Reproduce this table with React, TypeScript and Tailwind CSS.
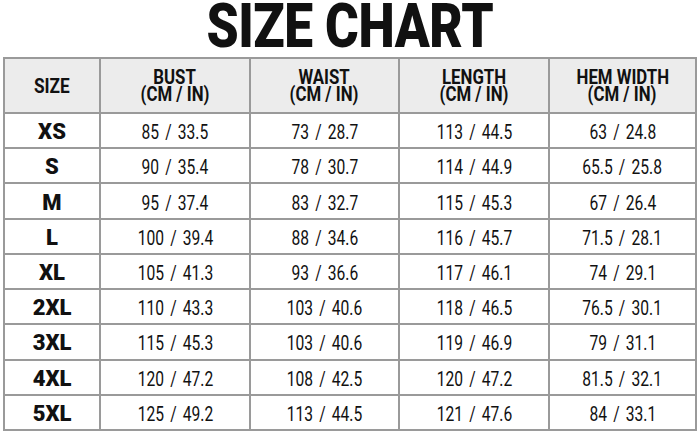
const headers = [
  { top: 'BUST', bottom: '(CM / IN)' },
  { top: 'WAIST', bottom: '(CM / IN)' },
  { top: 'LENGTH', bottom: '(CM / IN)' },
  { top: 'HEM WIDTH', bottom: '(CM / IN)' },
];

const rows: [string, string, string, string, string][] = [
  ['XS', '85 / 33.5', '73 / 28.7', '113 / 44.5', '63 / 24.8'],
  ['S', '90 / 35.4', '78 / 30.7', '114 / 44.9', '65.5 / 25.8'],
  ['M', '95 / 37.4', '83 / 32.7', '115 / 45.3', '67 / 26.4'],
  ['L', '100 / 39.4', '88 / 34.6', '116 / 45.7', '71.5 / 28.1'],
  ['XL', '105 / 41.3', '93 / 36.6', '117 / 46.1', '74 / 29.1'],
  ['2XL', '110 / 43.3', '103 / 40.6', '118 / 46.5', '76.5 / 30.1'],
  ['3XL', '115 / 45.3', '103 / 40.6', '119 / 46.9', '79 / 31.1'],
  ['4XL', '120 / 47.2', '108 / 42.5', '120 / 47.2', '81.5 / 32.1'],
  ['5XL', '125 / 49.2', '113 / 44.5', '121 / 47.6', '84 / 33.1'],
];

export default function App() {
  return (
    <div
      className="w-[700px] h-[435px] bg-white text-[#111] overflow-hidden"
      style={{ fontFamily: 'Roboto, "Liberation Sans", sans-serif' }}
    >
      {/* Title */}
      <div className="h-[57px] flex justify-center">
        <span className="inline-block text-[62px] leading-[52px] font-black tracking-[-0.5px] scale-x-[0.83]">
          SIZE CHART
        </span>
      </div>

      {/* Table */}
      <div className="ml-[3px] w-[694px] h-[374px] p-[2px] bg-[#9a9a9a] grid grid-cols-[94px_148px_147px_148px_145px] grid-rows-[53px_repeat(9,1fr)] gap-[2px]">
        <div className="bg-[#ececec] flex items-center justify-center pt-[1px]">
          <span className="inline-block text-[21px] leading-none font-bold scale-x-[0.82]">SIZE</span>
        </div>
        {headers.map((h) => (
          <div key={h.top} className="bg-[#ececec] flex flex-col items-center justify-center">
            <span className="block text-center text-[21px] leading-[17px] font-bold scale-x-[0.8]">{h.top}</span>
            <span className="block text-center text-[21px] leading-[17px] font-bold scale-x-[0.8]">{h.bottom}</span>
          </div>
        ))}

        {rows.map((r) =>
          r.map((cell, i) => (
            <div key={r[0] + i} className="bg-white flex items-center justify-center pt-[3px]">
              {i === 0 ? (
                <span className="inline-block text-[22px] leading-none font-black">{cell}</span>
              ) : (
                <span className="inline-block text-[20px] leading-none font-normal [word-spacing:3px] scale-x-[0.78]">
                  {cell}
                </span>
              )}
            </div>
          ))
        )}
      </div>
    </div>
  );
}
